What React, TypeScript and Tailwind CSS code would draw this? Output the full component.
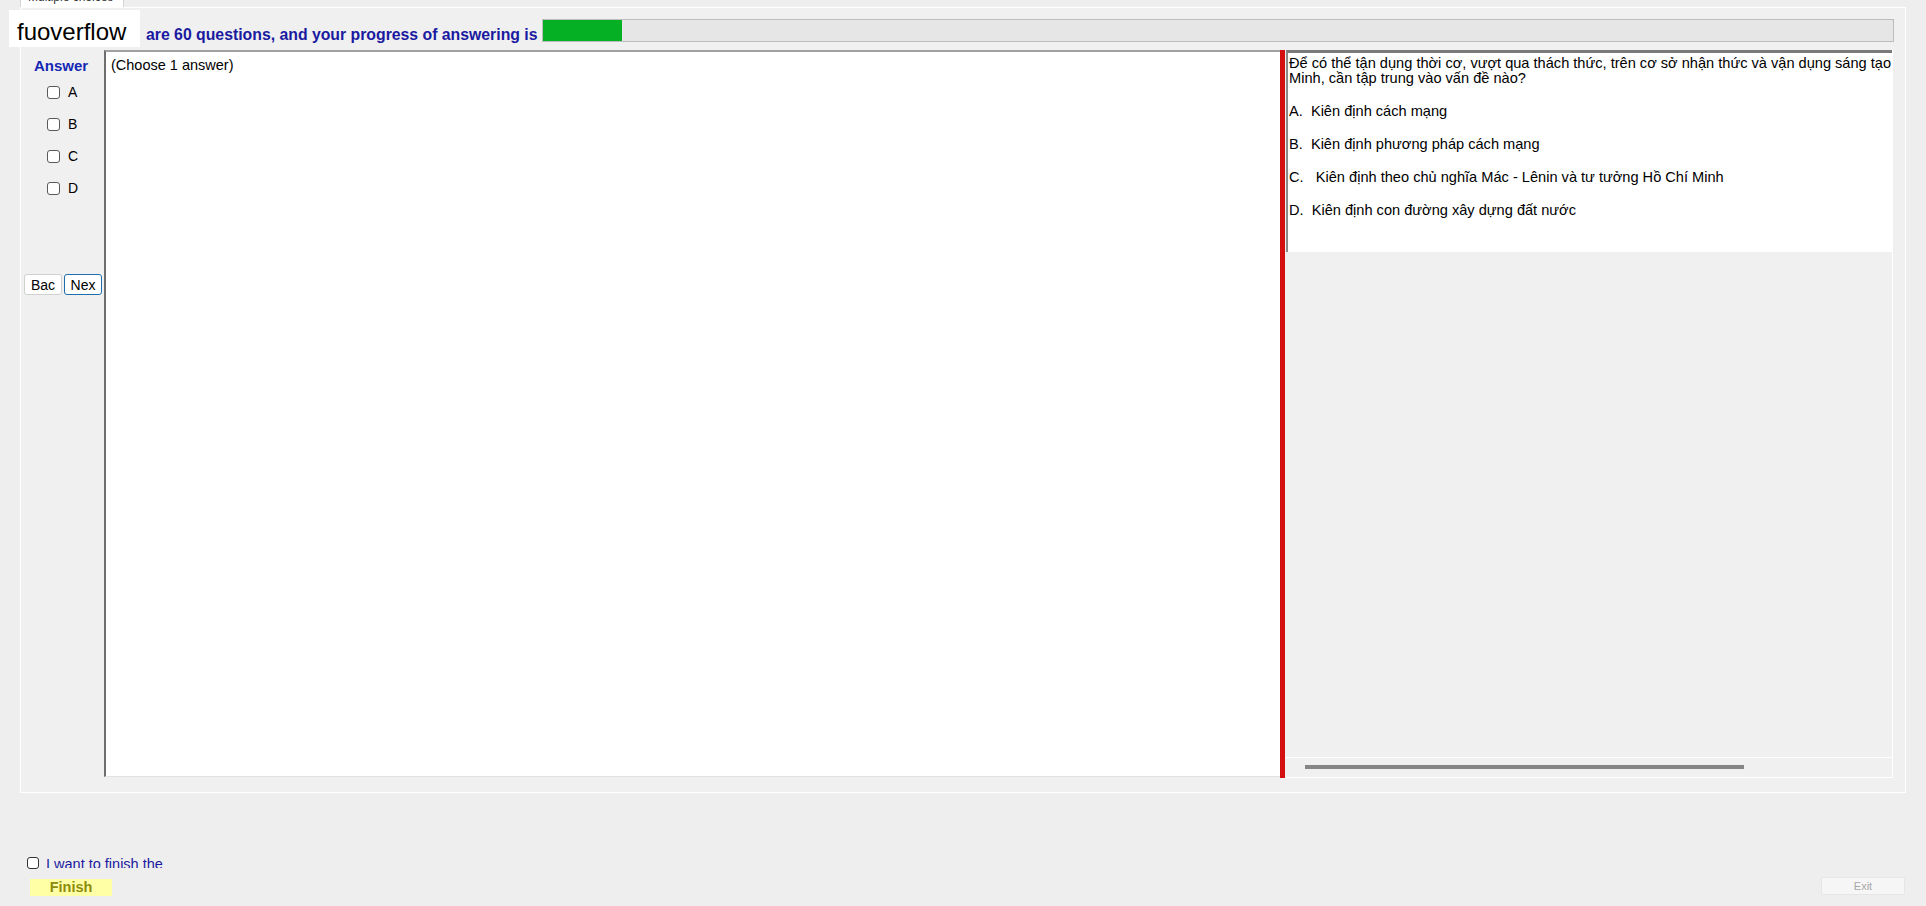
import React from 'react'

const options = [
  'A.  Kiên định cách mạng',
  'B.  Kiên định phương pháp cách mạng',
  'C.   Kiên định theo chủ nghĩa Mác - Lênin và tư tưởng Hồ Chí Minh',
  'D.  Kiên định con đường xây dựng đất nước',
]

function Box() {
  return <span className="block h-[13px] w-[13px] shrink-0 rounded-[3px] border border-[#5a5a5a] bg-white" />
}

export default function App() {
  return (
    <div className="relative h-[906px] w-[1926px] overflow-hidden bg-[#eeeeee] font-['Liberation_Sans',Arial,sans-serif] text-black">
      {/* tab strip */}
      <div className="flex h-[7px]">
        <div className="ml-[20px] h-[7px] w-[104px] overflow-hidden border-x border-[#d6d6d6] bg-white">
          <div className="-mt-[10px] pl-[7px] text-[12px] leading-[14px] text-[#333]">Multiple choices</div>
        </div>
      </div>

      {/* tab page */}
      <div className="ml-[20px] flex h-[786px] w-[1886px] flex-col border border-white bg-[#f0f0f0]">
        {/* progress header */}
        <div className="flex h-[42px] items-end pb-[8px]">
          <span className="-mb-[2px] ml-[125px] whitespace-nowrap text-[15.8px] font-bold leading-[18px] text-[#1a1aa0]">
            are 60 questions, and your progress of answering is
          </span>
          <div className="ml-[4px] mr-[11px] flex h-[23px] flex-1 border border-[#bcbcbc] bg-[#e6e6e6]">
            <div className="h-full w-[79px] bg-[#06b025]" />
          </div>
        </div>

        {/* main row */}
        <div className="flex h-[728px]">
          {/* answer sidebar */}
          <div className="flex w-[83px] flex-col">
            <div className="ml-[13px] mt-[7px] text-[15px] font-bold leading-[18px] text-[#1428b4]">Answer</div>
            <div className="mt-[1px] flex flex-col">
              {['A', 'B', 'C', 'D'].map((l) => (
                <label key={l} className="ml-[26px] flex h-[32px] items-center gap-[8px] text-[14px]">
                  <Box />
                  <span>{l}</span>
                </label>
              ))}
            </div>
            <div className="ml-[3px] mt-[70px] flex gap-[2px]">
              <button className="h-[21px] w-[38px] rounded-[3px] border border-[#d0d0d0] bg-white text-[14px] leading-none">
                Bac
              </button>
              <button className="h-[21px] w-[38px] rounded-[3px] border border-[#1f6fb0] bg-white text-[14px] leading-none">
                Nex
              </button>
            </div>
          </div>

          {/* answer text box */}
          <div className="h-[727px] w-[1176px] border-l-2 border-t-2 border-b border-l-[#6e6e6e] border-t-[#a0a0a0] border-b-[#e3e3e3] bg-white">
            <div className="pl-[5px] pt-[5px] text-[14.5px] leading-[17px]">(Choose 1 answer)</div>
          </div>

          {/* splitter */}
          <div className="h-[728px] w-[5px] bg-[#d40f0f]" />

          {/* question panel */}
          <div className="ml-[1px] flex w-[607px] flex-col border-r border-white">
            <div className="h-[202px] overflow-hidden border-l-2 border-t-[3px] border-l-[#8a8a8a] border-t-[#7a7a7a] bg-white pl-[1px] pt-[3px] text-[14.6px] leading-[15px]">
              <div className="whitespace-nowrap">
                Để có thể tận dụng thời cơ, vượt qua thách thức, trên cơ sở nhận thức và vận dụng sáng tạo tư tưởng Hồ Chí
              </div>
              <div className="whitespace-nowrap">Minh, cần tập trung vào vấn đề nào?</div>
              {options.map((o) => (
                <div key={o} className="mt-[18px] whitespace-pre">
                  {o}
                </div>
              ))}
            </div>
            <div className="flex-1" />
            <div className="h-[21px] border-y border-white">
              <div className="ml-[19px] mt-[7px] h-[4px] w-[439px] bg-[#858585]" />
            </div>
          </div>
        </div>
      </div>

      {/* bottom controls */}
      <div className="flex h-[113px] items-end justify-between pb-[10px]">
        <div className="ml-[27px] flex flex-col">
          <div className="flex h-[14px] items-start gap-[7px]">
            <span className="mt-[2px] block h-[12px] w-[12px] shrink-0 rounded-[3px] border border-[#333] bg-white" />
            <div className="h-[13px] overflow-hidden">
              <span className="block whitespace-nowrap pt-[2px] text-[14.5px] leading-[15px] text-[#1a1aa0]">I want to finish the</span>
            </div>
          </div>
          <div className="ml-[3px] mt-[10px] flex h-[17px] w-[82px] items-center justify-center bg-[#ffffa6] text-[14.5px] font-bold text-[#8c8c0a]">
            Finish
          </div>
        </div>
        <div className="mb-[1px] mr-[21px] flex h-[18px] w-[84px] items-center justify-center rounded-[2px] border border-[#e6e6e6] bg-[#f6f6f6] text-[11px] text-[#a8a8a8]">
          Exit
        </div>
      </div>

      {/* pasted label */}
      <div className="absolute left-[9px] top-[10px] flex h-[37px] w-[131px] items-end bg-white pb-[3px] pl-[8px] text-[24px] leading-none">
        fuoverflow
      </div>
    </div>
  )
}
